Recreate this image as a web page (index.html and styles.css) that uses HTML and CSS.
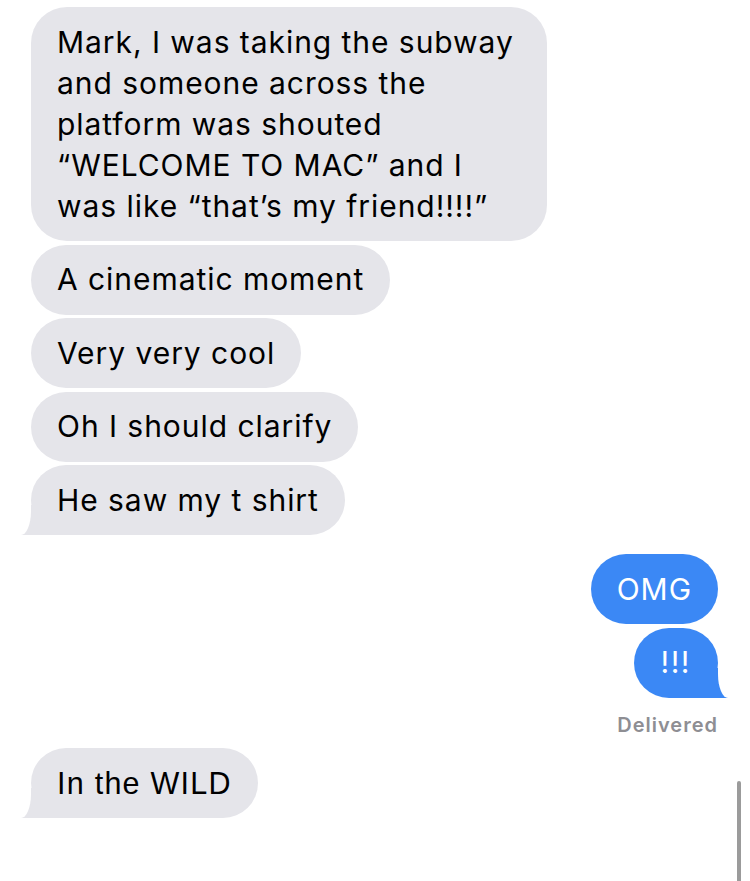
FILE: index.html
```html
<!DOCTYPE html>
<html>
<head>
<meta charset="utf-8">
<link rel="stylesheet" href="styles.css">
</head>
<body>
<div class="thread">
  <div class="group them-group">
    <div class="bubble them">Mark, I was taking the subway and someone across the platform was shouted “WELCOME TO MAC” and I was like “that’s my friend!!!!”</div>
    <div class="bubble them">A cinematic moment</div>
    <div class="bubble them">Very very cool</div>
    <div class="bubble them">Oh I should clarify</div>
    <div class="bubble them tail">He saw my t shirt</div>
  </div>
  <div class="group me-group">
    <div class="bubble me">OMG</div>
    <div class="bubble me tail bang">!!!</div>
    <div class="status">Delivered</div>
  </div>
  <div class="group them-group last">
    <div class="bubble them tail wild">In the WILD</div>
  </div>
</div>
<div class="scroll-indicator"></div>
</body>
</html>
```
FILE: styles.css
```css
html, body {
  margin: 0;
  padding: 0;
  background: #ffffff;
}
body {
  width: 750px;
  height: 881px;
  overflow: hidden;
  position: relative;
  font-family: Inter, "Liberation Sans", sans-serif;
}
.thread {
  display: flex;
  flex-direction: column;
  padding: 7px 32px 0 31px;
}
.group {
  display: flex;
  flex-direction: column;
  gap: 3.5px;
}
.them-group { align-items: flex-start; }
.me-group { align-items: flex-end; margin-top: 19px; }
.me-group + .them-group { margin-top: 11px; }
.bubble {
  position: relative;
  z-index: 0;
  font-size: 30px;
  line-height: 41px;
  padding: 14.5px 26px;
  border-radius: 36px;
  max-width: 464px;
  letter-spacing: 0.95px;
}
.them {
  background: #e5e5ea;
  color: #000;
}
.me {
  background: #3b88f5;
  color: #fff;
}
.bang {
  padding-left: 27px;
  padding-right: 27px;
  letter-spacing: 1.5px;
}
.tail::before,
.tail::after {
  content: "";
  position: absolute;
  z-index: -1;
  bottom: 0;
  height: 30px;
}
.them.tail::before {
  left: -10px;
  width: 50px;
  background: #e5e5ea;
}
.them.tail::after {
  left: -20px;
  width: 20px;
  background: #fff;
  border-bottom-right-radius: 10px 24px;
}
.me.tail::before {
  right: -10px;
  width: 50px;
  background: #3b88f5;
}
.me.tail::after {
  right: -20px;
  width: 20px;
  background: #fff;
  border-bottom-left-radius: 10px 24px;
}
.status {
  margin-top: 12px;
  font-size: 20px;
  font-weight: 600;
  color: #8e8e93;
  line-height: 24px;
  letter-spacing: 1px;
}
.wild {
  font-family: "Liberation Sans", Arial, sans-serif;
  font-size: 30.5px;
  letter-spacing: 1.25px;
}
.scroll-indicator {
  position: absolute;
  left: 737px;
  top: 781px;
  width: 4px;
  height: 110px;
  border-radius: 2px;
  background: #9b9b9b;
}
```
